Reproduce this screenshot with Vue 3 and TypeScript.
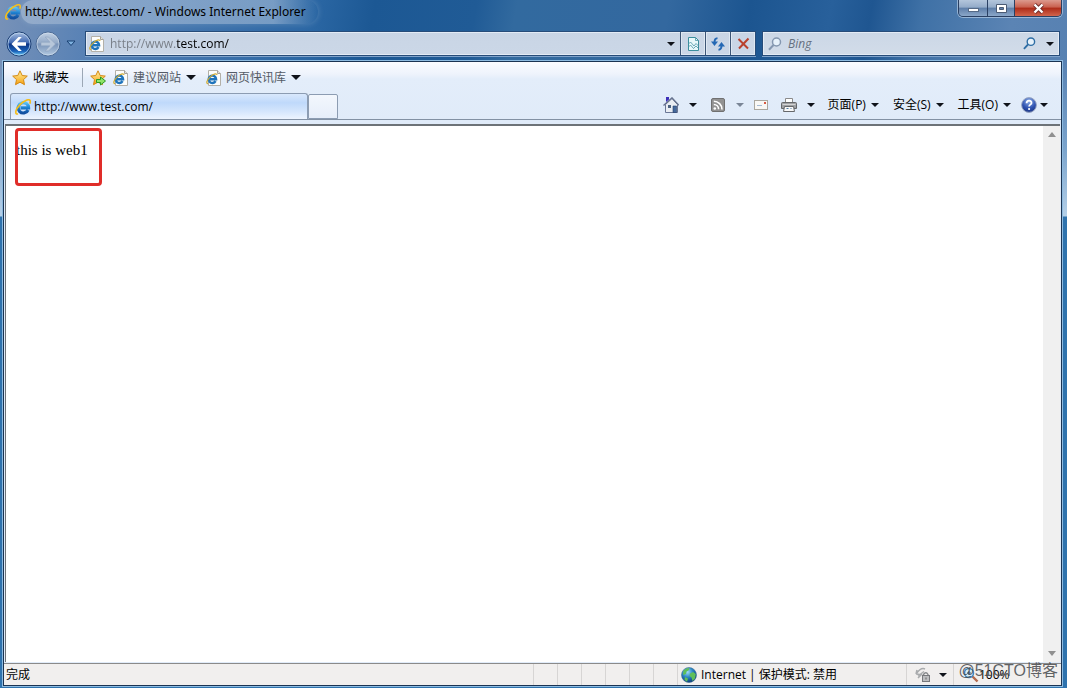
<script setup lang="ts">
import { ref } from 'vue'

interface MenuItem {
  label: string
}

const address = ref<string>('http://www.test.com/')
const query = ref<string>('')
const menus: MenuItem[] = [{ label: '页面(P)' }, { label: '安全(S)' }, { label: '工具(O)' }]
const favorites: string[] = ['建议网站', '网页快讯库']
const emptyPanes = 6
</script>

<template>
  <div class="window">
    <svg class="defs" aria-hidden="true">
      <defs>
        <linearGradient id="ieBlue" x1="0" y1="0" x2="0" y2="1">
          <stop offset="0" stop-color="#5cc4f4" />
          <stop offset="0.5" stop-color="#1b7fd0" />
          <stop offset="1" stop-color="#1350a0" />
        </linearGradient>
        <linearGradient id="starFill" x1="0" y1="0" x2="0" y2="1">
          <stop offset="0" stop-color="#fff0a0" />
          <stop offset="1" stop-color="#f6a010" />
        </linearGradient>
        <linearGradient id="backFill" x1="0" y1="0" x2="0" y2="1">
          <stop offset="0" stop-color="#a9bfe0" />
          <stop offset="0.45" stop-color="#3f68b0" />
          <stop offset="0.5" stop-color="#0c3484" />
          <stop offset="0.8" stop-color="#1a62b8" />
          <stop offset="1" stop-color="#6fd6ff" />
        </linearGradient>
        <linearGradient id="forwardFill" x1="0" y1="0" x2="0" y2="1">
          <stop offset="0" stop-color="#c3d2e4" />
          <stop offset="0.45" stop-color="#93aac8" />
          <stop offset="0.5" stop-color="#7893b8" />
          <stop offset="1" stop-color="#b5cbe2" />
        </linearGradient>
        <radialGradient id="globeFill" cx="0.4" cy="0.3" r="0.7">
          <stop offset="0" stop-color="#9fdcf8" />
          <stop offset="0.5" stop-color="#2b86c4" />
          <stop offset="1" stop-color="#0b3c78" />
        </radialGradient>
        <radialGradient id="helpFill" cx="0.5" cy="0.25" r="0.8">
          <stop offset="0" stop-color="#8fb0ea" />
          <stop offset="0.6" stop-color="#2c4fae" />
          <stop offset="1" stop-color="#1c347e" />
        </radialGradient>
      </defs>
      <symbol id="ie" viewBox="0 0 16 16">
        <path d="M13.100 11A5.200 5.200 0 1 1 13.600 8.900H5.500" fill="none" stroke="url(#ieBlue)" stroke-width="3.200" />
        <path d="M3 14.900C-.8 15.800.6 10 4.800 5.800 8.800 1.800 13.600-.3 15 1.400c.7.900.3 2.100-.3 3.300" fill="none" stroke="#f3bd1e" stroke-width="1.700" />
      </symbol>
      <symbol id="page" viewBox="0 0 16 16">
        <path d="M2.500.5h9l3 3v12h-12z" fill="#fdfdfb" stroke="#b3b0a8" />
        <path d="M11.500.5v3h3" fill="#e5e2da" stroke="#a5a39c" />
        <path d="M9.600 11.200A3.700 3.700 0 1 1 10.100 9.300H4" fill="none" stroke="#1f74bc" stroke-width="2.400" />
        <path d="M2 13.600c-2.300.2-1-3.600 1.700-6.300C6.900 4.100 10.700 2.900 11 5" fill="none" stroke="#d0ab32" stroke-width="1.200" />
      </symbol>
      <symbol id="star" viewBox="0 0 16 16">
        <path d="M8 .8l2.200 4.700 5.100.6-3.800 3.500 1 5.100L8 12.200l-4.500 2.500 1-5.100L.7 6.100l5.100-.6z" fill="url(#starFill)" stroke="#d48a16" />
      </symbol>
      <symbol id="lens" viewBox="0 0 14 14">
        <circle cx="8.500" cy="5" r="4" fill="#e6f1fa" stroke="currentColor" stroke-width="1.500" />
        <path d="M5.500 8L1 12.700" stroke="currentColor" stroke-width="2" fill="none" />
      </symbol>
    </svg>

    <header class="title-bar">
      <svg class="icon"><use href="#ie" /></svg>
      <h1 class="title">http://www.test.com/ - Windows Internet Explorer</h1>
      <div class="window-buttons">
        <button class="minimize" aria-label="最小化">
          <svg width="13" height="11" viewBox="0 0 13 11"><rect x="1.500" y="5.500" width="10" height="3" fill="#fff" stroke="#566a86" /></svg>
        </button>
        <button class="maximize" aria-label="最大化">
          <svg width="13" height="11" viewBox="0 0 13 11">
            <path fill-rule="evenodd" d="M1.500 1.500h10v8h-10zM4.500 4.500v2h4v-2z" fill="#fff" stroke="#4b5b74" />
          </svg>
        </button>
        <button class="close" aria-label="关闭">
          <svg width="13" height="11" viewBox="0 0 13 11">
            <path d="M2.500 1.500l8 8m0-8l-8 8" stroke="#6d2a28" stroke-width="4" />
            <path d="M2.500 1.500l8 8m0-8l-8 8" stroke="#fff" stroke-width="2.400" />
          </svg>
        </button>
      </div>
    </header>

    <nav class="nav-bar" aria-label="导航">
      <button class="round" aria-label="后退">
        <svg width="26" height="26" viewBox="0 0 26 26">
          <circle cx="13" cy="13" r="12" fill="url(#backFill)" stroke="#1d3f72" />
          <circle cx="13" cy="13" r="11" fill="none" stroke="#c6def4" stroke-opacity=".7" />
          <path d="M12.500 6L5.500 13l7 7h3.300l-4.700-5.200H20v-3.600h-8.900L15.800 6z" fill="#fff" />
        </svg>
      </button>
      <button class="round" aria-label="前进">
        <svg width="26" height="26" viewBox="0 0 26 26">
          <circle cx="13" cy="13" r="12" fill="url(#forwardFill)" stroke="#4d6c97" />
          <circle cx="13" cy="13" r="11" fill="none" stroke="#dce8f4" stroke-opacity=".5" />
          <path d="M13.500 6l7 7-7 7h-3.300l4.700-5.200H6v-3.600h8.900L10.200 6z" fill="#b7c7da" stroke="#8ea3bf" stroke-width=".6" />
        </svg>
      </button>
      <button class="recent" aria-label="最近的页面">
        <svg width="10" height="7" viewBox="0 0 10 7"><path d="M1 1h8L5 5.500z" fill="#7fb2e0" stroke="#173e70" /></svg>
      </button>

      <div class="address-bar">
        <svg class="icon"><use href="#page" /></svg>
        <input v-model="address" class="address" type="text" aria-label="地址" />
        <button class="drop" aria-label="显示地址列表"><span class="caret"></span></button>
        <button class="tool" aria-label="兼容性视图">
          <svg width="13" height="14" viewBox="0 0 13 14">
            <path d="M1.500.5h7l3 3v10h-10z" fill="#e8f8fa" stroke="#3b8e9d" />
            <path d="M8.500.5v3h3M1.500 7l2-2 3.500 4 2-2.500 2.500 2.500M1.500 10l2-2 3 3.500 2.500-2.500 2.500 2.500" fill="none" stroke="#4a93a4" stroke-width=".8" />
          </svg>
        </button>
        <button class="tool" aria-label="刷新">
          <svg width="14" height="14" viewBox="0 0 14 14">
            <path d="M6.500 1.200Q3.500 1.500 3.500 5" fill="none" stroke="#2468b4" stroke-width="1.800" />
            <path d="M0 4.500h7L3.500 9z" fill="#2468b4" />
            <path d="M7.500 12.800q3-.3 3-3.800" fill="none" stroke="#2468b4" stroke-width="1.800" />
            <path d="M7 9.500h7L10.500 5z" fill="#2468b4" />
          </svg>
        </button>
        <button class="tool" aria-label="停止">
          <svg width="13" height="13" viewBox="0 0 13 13">
            <path d="M1.500 2L11 11.500M11.500 1.500L2 11.500" fill="none" stroke="#b9422f" stroke-width="2" />
          </svg>
        </button>
      </div>

      <div class="search-bar">
        <svg class="lens pale"><use href="#lens" /></svg>
        <input v-model="query" class="search" type="text" placeholder="Bing" aria-label="搜索" />
        <button class="go" aria-label="执行搜索"><svg class="lens small"><use href="#lens" /></svg></button>
        <button class="drop" aria-label="搜索选项"><span class="caret"></span></button>
      </div>
    </nav>

    <div class="client">
      <div class="favorites-bar">
        <button class="fav-main"><svg class="icon"><use href="#star" /></svg>收藏夹</button>
        <span class="divider"></span>
        <button class="fav-add" aria-label="添加到收藏夹栏">
          <svg class="icon" viewBox="0 0 16 16">
            <use href="#star" width="16" height="16" />
            <path d="M6.500 9.500h4V7l5 4-5 4v-2.500h-4z" fill="#8fe468" stroke="#2f9a25" />
          </svg>
        </button>
        <button v-for="name in favorites" :key="name" class="fav-link">
          <svg class="icon"><use href="#page" /></svg><span>{{ name }}</span><span class="caret large"></span>
        </button>
      </div>

      <div class="tab-row">
        <div class="tabs" role="tablist">
          <button class="tab" role="tab" aria-selected="true">
            <svg class="icon"><use href="#ie" /></svg>http://www.test.com/
          </button>
          <button class="new-tab" aria-label="新选项卡"></button>
        </div>
        <div class="commands">
          <button class="split" aria-label="主页">
            <svg class="icon" viewBox="0 0 16 16">
              <path d="M2.500 7.500L9 1.500l5.500 6v8h-12z" fill="#e9edf3" stroke="#6a7796" />
              <path d="M.5 8.500L9 .8l6.700 7.400" fill="none" stroke="#66728e" stroke-width="1.300" />
              <path d="M3 0h3v2.500L3 5z" fill="#3d2fb8" />
              <path d="M5 8h3v3H5z" fill="#4b627f" />
              <path d="M10 9h3.500v6.500H10z" fill="#44699c" stroke="#26406b" stroke-width=".6" />
            </svg>
            <span class="caret"></span>
          </button>
          <button class="split" aria-label="源">
            <svg class="icon" viewBox="0 0 16 16">
              <rect x="1.500" y="1.500" width="13" height="13" rx="1.500" fill="#929292" stroke="#717171" />
              <circle cx="4.800" cy="11.500" r="1.300" fill="#fff" />
              <path d="M3.800 7.500a4.800 4.800 0 0 1 4.800 4.800M3.800 4.200a8.200 8.200 0 0 1 8.200 8.200" fill="none" stroke="#fff" stroke-width="1.600" />
            </svg>
            <span class="caret dim"></span>
          </button>
          <button class="mail" aria-label="阅读邮件">
            <svg class="icon" viewBox="0 0 16 16">
              <rect x="1.500" y="3.500" width="13" height="9" fill="#f9f8f5" stroke="#aaa79f" />
              <path d="M11 5h2v2h-2z" fill="#d85a44" />
              <path d="M4 8.500h5" stroke="#a5bbd4" />
            </svg>
          </button>
          <button class="split" aria-label="打印">
            <svg class="icon" viewBox="0 0 16 16">
              <path d="M4.500 1.500h7v5h-7z" fill="#fff" stroke="#8b8b8b" />
              <path d="M.5 6.500q0-1 1-1h13q1 0 1 1v5h-15z" fill="#a0a2a5" stroke="#66686b" />
              <path d="M1.500 7.500h13" stroke="#d4d4d4" />
              <path d="M3.500 9.500h9l1 5h-11z" fill="#f8f8f8" stroke="#66686b" />
              <path d="M5.500 11.500h2m2 0h1" stroke="#507fa8" />
            </svg>
            <span class="caret"></span>
          </button>
          <button v-for="menu in menus" :key="menu.label" class="menu">
            {{ menu.label }}<span class="caret"></span>
          </button>
          <button class="help" aria-label="帮助">
            <svg class="icon" viewBox="0 0 16 16">
              <circle cx="8" cy="8" r="7.400" fill="url(#helpFill)" stroke="#99a6c3" />
              <path d="M5.600 6.200c0-3.300 5-3.200 4.900-.3 0 1.700-2.400 1.800-2.400 3.600" fill="none" stroke="#fff" stroke-width="1.800" />
              <circle cx="8.100" cy="12" r="1.100" fill="#fff" />
            </svg>
            <span class="caret"></span>
          </button>
        </div>
      </div>

      <div class="viewport">
        <main class="document">
          <p class="body-text">this is web1</p>
          <div class="highlight"></div>
        </main>
        <div class="scrollbar" aria-hidden="true">
          <svg width="8" height="5" viewBox="0 0 8 5"><path d="M0 5l4-5 4 5z" fill="#909090" /></svg>
          <svg width="8" height="5" viewBox="0 0 8 5"><path d="M0 0l4 5 4-5z" fill="#909090" /></svg>
        </div>
      </div>

      <footer class="status-bar">
        <span class="status">完成</span>
        <span v-for="n in emptyPanes" :key="n" class="pane"></span>
        <span class="zone">
          <svg class="icon" viewBox="0 0 16 16">
            <circle cx="8" cy="8" r="7.500" fill="url(#globeFill)" stroke="#3c6f96" stroke-width=".6" />
            <path d="M2.500 3.500q3-3 6-2.500l-1 2.500-2 1-.5 2.500-3 1zM9 6.500l3-1.500 2.800 2-.8 4.500-2.500 2.500-1-3.500-2-1.500zM4 10l3 1.500-1 3.300-2.500-2z" fill="#5fbf58" />
          </svg>
          Internet | 保护模式: 禁用
        </span>
        <button class="privacy" aria-label="隐私报告">
          <svg class="icon" viewBox="0 0 16 16">
            <path d="M1 7q5-7 9-5M1 7l1-4M1 7l4 .5M3 9l6-4.500M3 11l4-4" fill="none" stroke="#a9abad" stroke-width="1.500" />
            <path d="M8.500 9V7.500q2.500-3.500 4.500 0V9" fill="none" stroke="#85878a" stroke-width="1.400" />
            <rect x="7.500" y="8.500" width="7" height="6" fill="#bcbdbf" stroke="#77797c" />
            <path d="M11 10.500v2" stroke="#666" />
          </svg>
          <span class="caret"></span>
        </button>
        <button class="zoom">
          <svg class="icon" viewBox="0 0 16 16">
            <path d="M9 9l5.500 5.500" stroke="#b4694c" stroke-width="2.400" />
            <circle cx="6" cy="6" r="4.500" fill="#d7ecfa" stroke="#3f86bd" stroke-width="1.500" />
            <path d="M4 6h4M6 4v4" stroke="#2c5f92" />
          </svg>
          100%
        </button>
      </footer>
    </div>
    <span class="watermark">@51CTO博客</span>
  </div>
</template>

<style>
html,
body {
  margin: 0;
  overflow: hidden;
}
</style>

<style scoped>
.window {
  position: relative;
  display: flex;
  flex-direction: column;
  box-sizing: border-box;
  height: 100vh;
  padding: 0 5px 2px 3px;
  overflow: hidden;
  font: 12px/16px 'Open Sans', 'Noto Sans', 'Noto Sans CJK SC', sans-serif;
  color: #000;
  background:
    linear-gradient(180deg, transparent 60px, rgba(160, 200, 232, 0.5) 150px, rgba(190, 216, 238, 0.9) 216px, #2f73ae 217px),
    linear-gradient(100deg, #7892b8 0, #5580b5 100px, #2b67a4 310px, #1c5894 370px, #205b96 470px, #326a9f 510px, #33689f 660px, #1c5590 740px, #28609b 820px, #1f5691 860px, #3f71a6 910px, #5b84b4 1000px, #517cae 100%);
}

.defs {
  position: absolute;
  width: 0;
  height: 0;
}

button {
  display: flex;
  align-items: center;
  margin: 0;
  padding: 0;
  border: 0;
  background: none;
  font: inherit;
  color: inherit;
  white-space: nowrap;
}

svg {
  display: block;
  flex: none;
}

.icon {
  flex: none;
  width: 16px;
  height: 16px;
}

.caret {
  flex: none;
  width: 0;
  height: 0;
  border: 4px solid transparent;
  border-top-color: #10131a;
  border-bottom: 0;
}

.caret.large {
  border-width: 5px;
  border-bottom: 0;
}

.caret.dim {
  border-top-color: #7a8596;
}

.title-bar {
  display: flex;
  align-items: flex-start;
  flex: none;
  height: 31px;
  padding-left: 2px;
}

.title-bar > .icon {
  margin-top: 4px;
}

.title {
  margin: 0 auto 0 0;
  padding: 4px 12px 4px 4px;
  font-family: 'Noto Sans', 'Open Sans', sans-serif;
  font-size: 12px;
  font-weight: 400;
  line-height: 16px;
  border-radius: 12px;
  background: linear-gradient(90deg, rgba(184, 201, 222, 0.5), rgba(176, 196, 220, 0.55) 85%, transparent);
  box-shadow: 0 0 6px rgba(176, 196, 220, 0.3);
}

.window-buttons {
  display: flex;
  height: 16px;
  border: 1px solid #2a4063;
  border-top: 0;
  border-radius: 0 0 5px 5px;
  box-shadow: 0 0 0 1px rgba(200, 218, 238, 0.6);
  overflow: hidden;
}

.window-buttons button {
  justify-content: center;
  height: 16px;
  background: linear-gradient(#b4c6dc 0, #94acc9 45%, #5e7ea8 50%, #8ba7c9 100%);
}

.minimize {
  width: 28px;
}

.window-buttons .maximize {
  width: 28px;
  border: solid #2a4063;
  border-width: 0 1px;
}

.window-buttons .close {
  width: 46px;
  background: linear-gradient(#dc9a8e 0, #c9604e 45%, #ad2b18 50%, #d2654c 100%);
}

.nav-bar {
  display: flex;
  align-items: center;
  flex: none;
  height: 25px;
  padding: 0 2px 5px 3px;
}

.round {
  margin-right: 3px;
}

.recent {
  margin: 0 9px 0 2px;
}

.address-bar,
.search-bar {
  display: flex;
  align-items: center;
  box-sizing: border-box;
  height: 25px;
  border: 1px solid #274c79;
  box-shadow: inset 0 0 0 1px #e3ebf5, 0 1px 0 #7fa3cc;
  background: linear-gradient(#c9d5e5, #cbd7e7);
}

.address-bar {
  flex: 1;
  padding-left: 3px;
}

.search-bar {
  flex: 0 0 298px;
  margin-left: 6px;
  padding-left: 5px;
  background: linear-gradient(#cbd7e6, #d2dce9);
}

input {
  flex: 1;
  min-width: 0;
  height: 20px;
  padding: 0;
  border: 0;
  outline: 0;
  background: none;
  font: inherit;
}

.address {
  margin-left: 5px;
  color: #333;
  background: linear-gradient(90deg, #777d86 66px, #000 66px, #000 119px, #777d86 119px);
  -webkit-background-clip: text;
  background-clip: text;
  -webkit-text-fill-color: transparent;
}

.search {
  margin-left: 6px;
}

.search::placeholder {
  color: #667080;
  font-style: italic;
  opacity: 1;
}

.drop {
  justify-content: center;
  width: 18px;
  height: 23px;
}

.tool {
  justify-content: center;
  box-sizing: border-box;
  width: 25px;
  height: 23px;
  border-left: 1px solid #3d5575;
  box-shadow: inset 0 0 0 1px #dfe8f2;
}

.lens {
  width: 14px;
  height: 14px;
}

.lens.pale {
  color: #8497b0;
}

.lens.small {
  width: 13px;
  height: 13px;
  color: #2d6da4;
}

.go {
  margin-right: 5px;
}

.client {
  display: flex;
  flex: 1;
  flex-direction: column;
  min-height: 0;
  border: 1px solid #1b3453;
  box-shadow: 0 0 0 1px #8ebbe0;
  background: linear-gradient(#fbfcff 0, #eef3fc 12px, #e3edfa 17px, #e0ebf9 58px);
}

.favorites-bar {
  display: flex;
  align-items: center;
  flex: none;
  height: 31px;
  padding-left: 8px;
}

.fav-main {
  gap: 5px;
}

.divider {
  width: 1px;
  height: 19px;
  margin: 0 7px 0 13px;
  background: #9ca7b5;
}

.fav-add {
  margin-right: 7px;
}

.fav-link {
  margin-right: 10px;
  color: #555b66;
}

.fav-link .icon {
  margin-right: 4px;
}

.fav-link .caret {
  margin-left: 5px;
}

.tab-row {
  display: flex;
  flex: none;
  height: 26px;
  padding: 0 13px 0 6px;
  border-bottom: 1px solid #8291a4;
}

.tabs {
  display: flex;
  flex: 1;
  align-items: flex-end;
}

.tab {
  box-sizing: border-box;
  width: 298px;
  height: 26px;
  padding-left: 4px;
  gap: 3px;
  border: 1px solid #8c9cb2;
  border-bottom: 0;
  border-radius: 3px 3px 0 0;
  background: linear-gradient(#d9e8fc 0, #bfd9fb 35%, #d5e6fc 70%, #edf4fe 100%);
}

.new-tab {
  box-sizing: border-box;
  width: 30px;
  height: 25px;
  border: 1px solid #8c9cb2;
  border-radius: 2px 2px 0 0;
  background: linear-gradient(#f3f7fd, #e6eefa);
}

.commands {
  display: flex;
  align-items: center;
  padding-bottom: 3px;
}

.split {
  gap: 10px;
  margin-right: 13px;
}

.mail {
  margin: 0 12px 0 -4px;
}

.menu {
  gap: 5px;
  margin-right: 14px;
}

.help {
  gap: 3px;
  margin-left: -4px;
}

.viewport {
  display: flex;
  flex: 1;
  min-height: 0;
  margin: 4px 1px 1px;
  border-top: 2px solid #6d7378;
  border-left: 1px solid #6d7378;
  background: #fff;
}

.document {
  position: relative;
  flex: 1;
  font-family: 'Liberation Serif', serif;
}

.body-text {
  margin: 15px 10px;
  font-size: 15px;
  line-height: 18px;
}

.highlight {
  position: absolute;
  top: 2px;
  left: 9px;
  box-sizing: border-box;
  width: 87px;
  height: 58px;
  border: 3px solid #e02d29;
  border-radius: 4px;
}

.scrollbar {
  display: flex;
  flex-direction: column;
  align-items: center;
  justify-content: space-between;
  box-sizing: border-box;
  width: 17px;
  padding: 6px 0;
  background: #f0f0f0;
}

.status-bar {
  display: flex;
  align-items: center;
  flex: none;
  height: 21px;
  border-top: 1px solid #8a8a8a;
  background: #f1efee;
}

.status {
  flex: 1;
  padding-left: 2px;
}

.pane {
  box-sizing: border-box;
  width: 24px;
  height: 21px;
  border-left: 1px solid #d7d5d4;
}

.zone,
.privacy,
.zoom {
  display: flex;
  align-items: center;
  box-sizing: border-box;
  height: 21px;
  border-left: 1px solid #d7d5d4;
}

.zone {
  width: 229px;
  gap: 4px;
  padding-left: 3px;
}

.privacy {
  width: 47px;
  gap: 8px;
  padding-left: 8px;
}

.zoom {
  width: 108px;
  padding-left: 9px;
}

.watermark {
  position: absolute;
  right: 9px;
  bottom: 6px;
  font: 16px/22px 'Liberation Sans', 'Noto Sans CJK SC', sans-serif;
  color: rgba(70, 72, 76, 0.85);
}
</style>
